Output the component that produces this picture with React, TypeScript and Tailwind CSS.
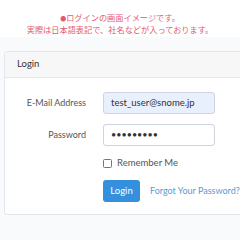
export default function App() {
  return (
    <div className="w-[240px] h-[240px] overflow-hidden bg-[#f8fafc] font-['Lato','Noto_Sans_CJK_JP',sans-serif] text-[#555]">
      <div className="h-[37px] bg-white pt-[12px] text-center text-[8.2px] leading-[11px] text-[#e35a70] font-['Noto_Sans_CJK_JP',sans-serif]">
        <p>
          <span className="text-[6px] align-middle">●</span>ログインの画面イメージです。
        </p>
        <p>実際は日本語表記で、社名などが入っております。</p>
      </div>
      <div className="pt-[14px] pl-[4px]">
        <div className="w-[260px] rounded-[3px] border border-[#e3e6ea] bg-white">
          <div className="h-[26px] flex items-center px-[12px] bg-[#f7f7f7] border-b border-[#e3e6ea] text-[9.5px] text-[#333]">
            Login
          </div>
          <div className="pt-[14px] pb-[12px] flex flex-col gap-[10px]">
            <div className="flex items-center">
              <label className="w-[81px] text-right text-[9px]">E-Mail Address</label>
              <div className="ml-[17px] w-[112px] h-[22px] rounded-[3px] border border-[#ced4da] bg-[#e8f0fe] flex items-center px-[7px] text-[9.5px] text-[#333]">
                test_user@snome.jp
              </div>
            </div>
            <div className="flex items-center">
              <label className="w-[81px] text-right text-[9px]">Password</label>
              <div className="ml-[17px] w-[112px] h-[22px] rounded-[3px] border border-[#ced4da] bg-white flex items-center px-[7px] text-[9px] text-[#333]">
                •••••••••
              </div>
            </div>
            <div className="flex items-center pl-[98px] h-[14px]">
              <span className="w-[9px] h-[9px] rounded-[1.5px] border border-[#767676] bg-white" />
              <span className="ml-[5px] text-[9.5px]">Remember Me</span>
            </div>
            <div className="flex items-center pl-[98px]">
              <button className="w-[37px] h-[22px] rounded-[3px] bg-[#3490dc] text-white text-[9.5px]">Login</button>
              <span className="ml-[10px] text-[9px] text-[#5a9ad3] whitespace-nowrap">Forgot Your Password?</span>
            </div>
          </div>
        </div>
      </div>
    </div>
  );
}
